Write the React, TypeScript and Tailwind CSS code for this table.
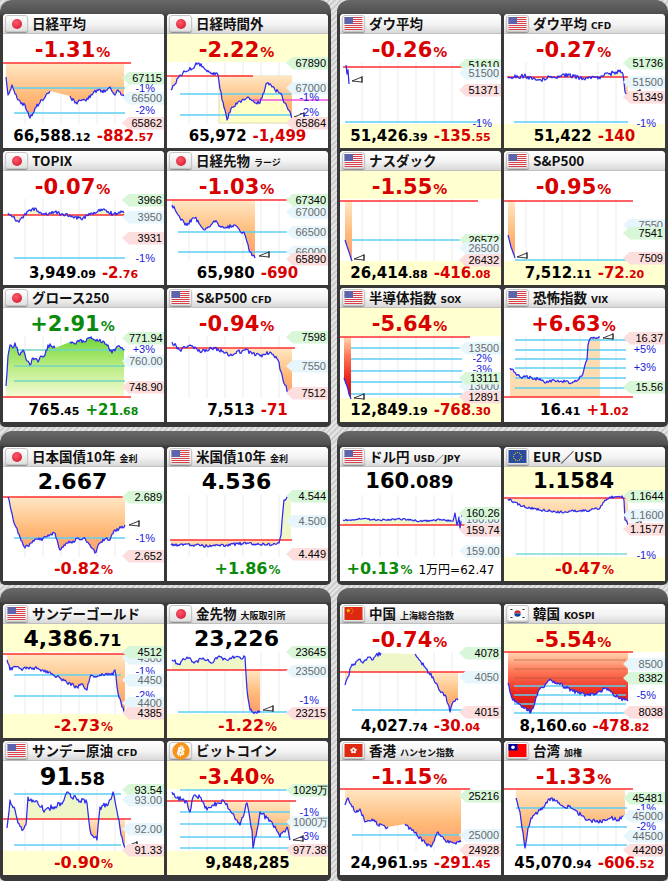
import React from "react";

type Kind = "hi" | "lo" | "mid" | "pct";
type Label = [number, string, Kind];
type Flag = "jp" | "us" | "eu" | "cn" | "kr" | "hk" | "tw" | "btc";

interface Chart {
  ref: number;
  refX?: [number, number];
  keys: number[][];
  amp?: number;
  below?: "orange" | "red" | "none";
  above?: "pale" | "green" | "orange" | "none";
  cyan?: number[];
  cyanX?: [number, number];
  cyanColor?: string;
  dark?: number[];
  magenta?: [number, number, number];
  box?: [number, number, number, number];
  marker?: [number, number];
  labels: Label[];
}

interface TileData {
  flag: Flag;
  title: string;
  sub?: string;
  top: React.ReactNode;
  topYellow?: boolean;
  bottom: React.ReactNode;
  bottomYellow?: boolean;
  chart: Chart;
}

const RED = "text-[#d80000]";
const GRN = "text-[#0a8a0a]";
const NUM = "[font-family:'DejaVu_Sans',sans-serif] font-bold";

const TAG_BASE =
  "absolute right-0 h-[13px] w-[42px] leading-[13px] text-[11px] text-right whitespace-nowrap [font-family:'Liberation_Sans',sans-serif]";
const TAG: Record<Kind, string> = {
  hi: TAG_BASE + " pl-[7px] pr-[2px] text-black bg-[#d8f6d8] [clip-path:polygon(7px_0,100%_0,100%_100%,7px_100%,0_50%)]",
  lo: TAG_BASE + " pl-[7px] pr-[2px] text-black bg-[#fcdede] [clip-path:polygon(7px_0,100%_0,100%_100%,7px_100%,0_50%)]",
  mid: TAG_BASE + " pl-[7px] pr-[2px] text-[#6a6a6a] bg-[#e6f6fc] [clip-path:polygon(7px_0,100%_0,100%_100%,7px_100%,0_50%)]",
  pct: TAG_BASE + " pr-[9px] text-[#1a1ae0]",
};

function PctTop({ v, c }: { v: string; c: string }) {
  return (
    <div className={`h-full flex items-baseline justify-center pr-[22px] pt-[6px] ${NUM} ${c}`}>
      <span className="text-[21px] leading-none">{v}</span>
      <span className="text-[14px] leading-none ml-[1px]">%</span>
    </div>
  );
}

function TopVal({ i, d, bi, sd }: { i: string; d?: string; bi: string; sd?: string }) {
  return (
    <div className={`h-full flex items-baseline justify-center pr-[22px] pt-[4px] text-black ${NUM}`}>
      <span className={`${bi} leading-none`}>{i}</span>
      {d && <span className={`${sd} leading-none`}>{d}</span>}
    </div>
  );
}

function Vals({ a, ad, b, bd, c }: { a: string; ad?: string; b?: string; bd?: string; c?: string }) {
  return (
    <div className={`h-full flex items-baseline justify-center gap-[6px] pt-[5px] ${NUM}`}>
      <span className="text-[15px] leading-none text-black">
        {a}
        {ad && <span className="text-[11px]">{ad}</span>}
      </span>
      {b && (
        <span className={`text-[15px] leading-none ${c}`}>
          {b}
          {bd && <span className="text-[11px]">{bd}</span>}
        </span>
      )}
    </div>
  );
}

function PctBot({ v, c, extra }: { v: string; c: string; extra?: string }) {
  return (
    <div className={`h-full flex items-baseline justify-center pt-[4px] ${NUM}`}>
      <span className={`text-[16px] leading-none ${c}`}>{v}</span>
      <span className={`text-[12px] leading-none ml-[1px] ${c}`}>%</span>
      {extra && (
        <span className="ml-[6px] text-[12px] leading-none font-normal text-black [font-family:'DejaVu_Sans','Noto_Sans_CJK_JP',sans-serif]">
          {extra}
        </span>
      )}
    </div>
  );
}

function star(cx: number, cy: number, r: number) {
  const p: string[] = [];
  for (let i = 0; i < 10; i++) {
    const a = -Math.PI / 2 + (i * Math.PI) / 5;
    const rr = i % 2 === 0 ? r : r * 0.4;
    p.push(`${(cx + rr * Math.cos(a)).toFixed(2)},${(cy + rr * Math.sin(a)).toFixed(2)}`);
  }
  return p.join(" ");
}

function FlagIcon({ f }: { f: Flag }) {
  if (f === "jp")
    return <span className="w-[10px] h-[10px] rounded-full bg-[radial-gradient(circle_at_40%_35%,#ff5a6a,#cc0f2a)]" />;
  if (f === "btc")
    return (
      <svg width="18" height="18" viewBox="0 0 20 20">
        <circle cx="10" cy="10" r="9.6" fill="#f7931a" />
        <g transform="rotate(14 10 10)">
          <line x1="8.6" y1="3.6" x2="8.6" y2="16.4" stroke="#fff" strokeWidth="1" />
          <line x1="10.8" y1="3.6" x2="10.8" y2="16.4" stroke="#fff" strokeWidth="1" />
          <text x="10.3" y="14.4" textAnchor="middle" fontSize="12.5" fontWeight="700" fill="#fff" fontFamily="Liberation Sans, sans-serif">
            B
          </text>
        </g>
      </svg>
    );
  return (
    <svg width="19" height="13" viewBox="0 0 18 13">
      {f === "us" && (
        <>
          <rect width="18" height="13" fill="#f4f4f4" />
          {[0, 2, 4, 6, 8, 10, 12].map((y) => (
            <rect key={y} y={y} width="18" height="1" fill="#d8404a" />
          ))}
          <rect width="8.5" height="7" fill="#5b64ad" />
        </>
      )}
      {f === "eu" && (
        <>
          <rect width="18" height="13" fill="#2a4c9f" />
          {Array.from({ length: 12 }).map((_, i) => (
            <circle key={i} cx={9 + 4 * Math.cos((i * Math.PI) / 6)} cy={6.5 + 4 * Math.sin((i * Math.PI) / 6)} r="0.6" fill="#ffd800" />
          ))}
        </>
      )}
      {f === "cn" && (
        <>
          <rect width="18" height="13" fill="#de2910" />
          <polygon points={star(3.8, 3.6, 2.4)} fill="#ffde00" />
          <polygon points={star(7.2, 1.4, 0.8)} fill="#ffde00" />
          <polygon points={star(8.4, 3, 0.8)} fill="#ffde00" />
          <polygon points={star(8.4, 5, 0.8)} fill="#ffde00" />
          <polygon points={star(7.2, 6.5, 0.8)} fill="#ffde00" />
        </>
      )}
      {f === "kr" && (
        <>
          <rect width="18" height="13" fill="#fafafa" />
          <path d="M5.8 6.5 A3.2 3.2 0 0 1 12.2 6.5 Z" fill="#cd2e3a" />
          <path d="M5.8 6.5 A3.2 3.2 0 0 0 12.2 6.5 Z" fill="#0047a0" />
          <rect x="2" y="2" width="2" height="1" fill="#222" />
          <rect x="14" y="2" width="2" height="1" fill="#222" />
          <rect x="2" y="10" width="2" height="1" fill="#222" />
          <rect x="14" y="10" width="2" height="1" fill="#222" />
        </>
      )}
      {f === "hk" && (
        <>
          <rect width="18" height="13" fill="#de2910" />
          {[0, 1, 2, 3, 4].map((i) => {
            const a = -Math.PI / 2 + (i * 2 * Math.PI) / 5;
            return <ellipse key={i} cx={9 + 2 * Math.cos(a)} cy={6.5 + 2 * Math.sin(a)} rx="1.4" ry="1.1" fill="#fff" />;
          })}
        </>
      )}
      {f === "tw" && (
        <>
          <rect width="18" height="13" fill="#fe0000" />
          <rect width="9" height="6.5" fill="#000095" />
          <circle cx="4.5" cy="3.25" r="1.8" fill="#fff" />
        </>
      )}
    </svg>
  );
}

function build(keys: number[][], amp: number, seed: number) {
  let s = seed * 9301 + 49297;
  const rnd = () => {
    s = (s * 16807) % 2147483647;
    return s / 2147483647;
  };
  const pts: { x: number; y: number; b: boolean }[] = [];
  keys.forEach((k, i) => {
    if (i === 0) {
      pts.push({ x: k[0], y: k[1], b: false });
      return;
    }
    const [x0, y0] = keys[i - 1];
    const [x1, y1] = k;
    if (k[2]) {
      pts.push({ x: x1, y: y1, b: true });
      return;
    }
    const n = Math.max(1, Math.round(x1 - x0));
    for (let j = 1; j <= n; j++) {
      const t = j / n;
      const nz = j < n ? (rnd() - 0.5) * 2 * amp : 0;
      pts.push({ x: x0 + (x1 - x0) * t, y: Math.min(64, Math.max(-1, y0 + (y1 - y0) * t + nz)), b: false });
    }
  });
  return pts;
}

const GRID = [22, 40, 58, 76, 94, 112];

function ChartView({ c, id, seed }: { c: Chart; id: string; seed: number }) {
  const pts = build(c.keys, c.amp ?? 2, seed);
  const first = pts[0];
  const last = pts[pts.length - 1];
  const line = pts.map((p, i) => `${i === 0 || p.b ? "M" : "L"}${p.x.toFixed(1)} ${p.y.toFixed(1)}`).join("");
  const poly = `${first.x},${c.ref} ` + pts.map((p) => `${p.x.toFixed(1)},${p.y.toFixed(1)}`).join(" ") + ` ${last.x},${c.ref}`;
  const [rx1, rx2] = c.refX ?? [0, 128];
  const [cx1, cx2] = c.cyanX ?? [11, 122];
  const below = c.below ?? "orange";
  const above = c.above ?? "pale";
  return (
    <div className="relative z-10 h-[62px]">
      <svg width="161" height="62" className="absolute left-0 top-0 overflow-visible">
        <defs>
          <linearGradient id={`o${id}`} gradientUnits="userSpaceOnUse" x1="0" y1={c.ref} x2="0" y2={Math.max(c.ref + 1, 62)}>
            <stop offset="0" stopColor="#ffe7c4" />
            <stop offset="0.55" stopColor="#ffb977" />
            <stop offset="1" stopColor="#ff9870" />
          </linearGradient>
          <linearGradient id={`r${id}`} gradientUnits="userSpaceOnUse" x1="0" y1={c.ref} x2="0" y2="62">
            <stop offset="0" stopColor="#ffd8b0" />
            <stop offset="0.3" stopColor="#ff7a58" />
            <stop offset="0.65" stopColor="#ec2a20" />
            <stop offset="1" stopColor="#c80e0e" />
          </linearGradient>
          <linearGradient id={`g${id}`} gradientUnits="userSpaceOnUse" x1="0" y1="0" x2="0" y2={Math.max(c.ref, 1)}>
            <stop offset="0" stopColor="#6fd638" />
            <stop offset="0.45" stopColor="#b4ea7a" />
            <stop offset="1" stopColor="#f4fcd6" />
          </linearGradient>
          <clipPath id={`a${id}`}>
            <rect x="0" y="-10" width="161" height={c.ref + 10} />
          </clipPath>
          <clipPath id={`b${id}`}>
            <rect x="0" y={c.ref} width="161" height="100" />
          </clipPath>
        </defs>
        {GRID.map((x) => (
          <line key={x} x1={x} y1="0" x2={x} y2="62" stroke="#ebebeb" strokeWidth="1" />
        ))}
        {c.box && (
          <rect x={c.box[0]} y={c.box[1]} width={c.box[2]} height={c.box[3]} fill="#ffffc6" stroke="#d4d4a8" strokeWidth="0.8" />
        )}
        {above !== "none" && (
          <polygon
            points={poly}
            clipPath={`url(#a${id})`}
            fill={above === "green" ? `url(#g${id})` : above === "orange" ? "#fcdcb0" : "#eff7c8"}
          />
        )}
        {below !== "none" && (
          <polygon points={poly} clipPath={`url(#b${id})`} fill={below === "red" ? `url(#r${id})` : `url(#o${id})`} />
        )}
        {(c.dark ?? []).map((y) => (
          <line key={`d${y}`} x1={cx1} y1={y} x2={cx2} y2={y} stroke="#a0523a" strokeOpacity="0.55" strokeWidth="1" />
        ))}
        {(c.cyan ?? []).map((y) => (
          <line key={`c${y}`} x1={cx1} y1={y} x2={cx2} y2={y} stroke={c.cyanColor ?? "#5ccff2"} strokeWidth="1.3" />
        ))}
        <line x1={rx1} y1={c.ref} x2={rx2} y2={c.ref} stroke="#ff2e2e" strokeWidth="1.3" />
        {c.magenta && (
          <line x1={c.magenta[1]} y1={c.magenta[0]} x2={c.magenta[2]} y2={c.magenta[0]} stroke="#f050e0" strokeWidth="1.3" />
        )}
        <path d={line} fill="none" stroke="#2b2bf2" strokeWidth="1.25" strokeLinejoin="round" />
        {c.marker && (
          <path
            d={`M${c.marker[0]} ${c.marker[1]} l10 -4 l0 5 z M${c.marker[0] + 10} ${c.marker[1] - 5} l0 7`}
            fill="#fff"
            stroke="#222"
            strokeWidth="0.9"
          />
        )}
      </svg>
      {c.labels.map(([y, t, k], i) => (
        <div key={i} className={TAG[k]} style={{ top: y - 6.5 }}>
          {t}
        </div>
      ))}
    </div>
  );
}

function Tile({ d, id, seed }: { d: TileData; id: string; seed: number }) {
  return (
    <div className="w-[161px] h-[134px] bg-white rounded-t-[4px] overflow-hidden flex flex-col">
      <div className="h-[20px] shrink-0 flex items-center gap-[4px] pl-[2px] bg-[linear-gradient(#ffffff,#f3f3f3_55%,#d8d8d8)] border-b border-[#c0c0c0]">
        <div className="w-[23px] h-[17px] shrink-0 flex items-center justify-center rounded-[3px] border border-[#c6c6c6] bg-[linear-gradient(#ffffff,#e0e0e0)] shadow-[0_1px_1px_rgba(0,0,0,0.35)]">
          <FlagIcon f={d.flag} />
        </div>
        <div className="flex items-baseline gap-[4px] whitespace-nowrap">
          <span className="text-[13.5px] leading-none font-bold text-[#111] [font-family:'Noto_Sans_CJK_JP',sans-serif]">
            {d.title}
          </span>
          {d.sub && (
            <span className="text-[9px] leading-none font-bold text-[#111] [font-family:'DejaVu_Sans','Noto_Sans_CJK_JP',sans-serif]">
              {d.sub}
            </span>
          )}
        </div>
      </div>
      <div className={d.topYellow ? "h-[28px] shrink-0 bg-[#ffffd0]" : "h-[28px] shrink-0"}>{d.top}</div>
      <ChartView c={d.chart} id={id} seed={seed} />
      <div className={d.bottomYellow ? "h-[24px] shrink-0 bg-[#ffffd0]" : "h-[24px] shrink-0"}>{d.bottom}</div>
    </div>
  );
}

const nikkei: TileData = {
  flag: "jp",
  title: "日経平均",
  top: <PctTop v="-1.31" c={RED} />,
  bottom: <Vals a="66,588" ad=".12" b="-882" bd=".57" c={RED} />,
  chart: {
    ref: 1,
    keys: [[3, 15], [5, 33], [9, 23], [15, 38], [22, 43], [27, 56], [32, 46], [39, 38], [47, 29], [67, 34, 1], [72, 41], [82, 38], [89, 33], [94, 28], [102, 30], [107, 25], [112, 33], [115, 28], [121, 34]],
    cyan: [26, 51],
    labels: [[16, "67115", "hi"], [26, "-1%", "pct"], [36, "66500", "mid"], [48, "-2%", "pct"], [61, "65862", "lo"]],
  },
};

const nikkeiNight: TileData = {
  flag: "jp",
  title: "日経時間外",
  topYellow: true,
  top: <PctTop v="-2.22" c={RED} />,
  bottom: <Vals a="65,972" b="-1,499" c={RED} />,
  chart: {
    ref: 14,
    refX: [0, 86],
    magenta: [38, 86, 161],
    box: [52, 14, 72, 47],
    above: "none",
    keys: [[4, 28], [13, 13], [22, 8], [31, 1], [37, 6], [43, 10], [51, 13], [55, 38], [60, 58], [65, 45], [70, 42], [75, 38], [81, 35], [87, 40], [93, 41], [100, 21], [105, 25], [108, 28], [113, 31], [118, 41], [125, 56]],
    cyan: [32, 53],
    cyanX: [13, 124],
    marker: [127, 55],
    labels: [[1, "67890", "hi"], [26, "67000", "mid"], [35, "-1%", "pct"], [50, "-2%", "pct"], [61, "65864", "lo"]],
  },
};

const dow: TileData = {
  flag: "us",
  title: "ダウ平均",
  top: <PctTop v="-0.26" c={RED} />,
  bottomYellow: true,
  bottom: <Vals a="51,426" ad=".39" b="-135" bd=".55" c={RED} />,
  chart: {
    ref: 5,
    refX: [3, 158],
    amp: 0,
    keys: [[6, 3], [7, 12], [8, 8], [9, 22]],
    cyan: [60],
    cyanX: [5, 140],
    marker: [12, 19],
    labels: [[3, "51610", "hi"], [11, "51500", "mid"], [28, "51371", "lo"], [61, "-1%", "pct"]],
  },
};

const dowCfd: TileData = {
  flag: "us",
  title: "ダウ平均",
  sub: "CFD",
  top: <PctTop v="-0.27" c={RED} />,
  bottomYellow: true,
  bottom: <Vals a="51,422" b="-140" c={RED} />,
  chart: {
    ref: 15,
    refX: [3, 124],
    amp: 2.2,
    keys: [[4, 16], [20, 14], [35, 18], [50, 15], [65, 13], [80, 17], [95, 15], [105, 12], [112, 10], [116, 8], [119, 12], [121, 30], [124, 33]],
    cyan: [60],
    cyanX: [10, 124],
    marker: [126, 32],
    labels: [[1, "51736", "hi"], [20, "51500", "mid"], [35, "51349", "lo"], [61, "-1%", "pct"]],
  },
};

const topix: TileData = {
  flag: "jp",
  title: "TOPIX",
  top: <PctTop v="-0.07" c={RED} />,
  bottom: <Vals a="3,949" ad=".09" b="-2" bd=".76" c={RED} />,
  chart: {
    ref: 16,
    keys: [[5, 14], [10, 18], [15, 22], [20, 19], [25, 12], [30, 9], [38, 14], [45, 16], [52, 13], [60, 15], [70, 18], [80, 19], [88, 14], [95, 12], [102, 11], [110, 15], [116, 13], [121, 14]],
    cyan: [59],
    labels: [[1, "3966", "hi"], [18, "3950", "mid"], [39, "3931", "lo"], [59, "-1%", "pct"]],
  },
};

const nikkeiFut: TileData = {
  flag: "jp",
  title: "日経先物",
  sub: "ラージ",
  top: <PctTop v="-1.03" c={RED} />,
  bottom: <Vals a="65,980" b="-690" c={RED} />,
  chart: {
    ref: 1,
    keys: [[5, 6], [11, 16], [18, 26], [28, 19], [38, 31], [48, 23], [58, 29], [68, 26], [78, 36], [83, 53], [88, 59]],
    cyan: [33, 53],
    marker: [92, 57],
    labels: [[1, "67340", "hi"], [13, "67000", "mid"], [33, "66500", "mid"], [53, "66000", "mid"], [60, "65890", "lo"]],
  },
};

const nasdaq: TileData = {
  flag: "us",
  title: "ナスダック",
  topYellow: true,
  top: <PctTop v="-1.55" c={RED} />,
  bottomYellow: true,
  bottom: <Vals a="26,414" ad=".88" b="-416" bd=".08" c={RED} />,
  chart: {
    ref: 2,
    refX: [0, 138],
    amp: 0.5,
    keys: [[5, 41], [8, 50], [12, 62]],
    cyan: [41],
    cyanX: [12, 123],
    marker: [14, 60],
    labels: [[41, "26572", "hi"], [49, "26500", "mid"], [61, "26432", "lo"]],
  },
};

const sp500: TileData = {
  flag: "us",
  title: "S&P500",
  top: <PctTop v="-0.95" c={RED} />,
  bottomYellow: true,
  bottom: <Vals a="7,512" ad=".11" b="-72" bd=".20" c={RED} />,
  chart: {
    ref: 2,
    refX: [0, 129],
    amp: 0.5,
    keys: [[4, 36], [7, 48], [11, 59]],
    cyan: [61],
    cyanX: [11, 126],
    marker: [13, 58],
    labels: [[26, "7550", "mid"], [34, "7541", "hi"], [59, "7509", "lo"]],
  },
};

const growth: TileData = {
  flag: "jp",
  title: "グロース250",
  top: <PctTop v="+2.91" c={GRN} />,
  bottom: <Vals a="765" ad=".45" b="+21" bd=".68" c={GRN} />,
  chart: {
    ref: 61,
    above: "green",
    below: "none",
    keys: [[3, 50], [5, 20], [7, 9], [10, 12], [12, 7], [15, 16], [17, 19], [20, 14], [24, 25], [27, 29], [30, 22], [35, 26], [38, 20], [42, 19], [45, 9], [52, 12], [67, 6, 1], [72, 8], [77, 4], [82, 6], [87, 2], [93, 5], [100, 5], [105, 9], [109, 17], [113, 12], [115, 10], [118, 12], [121, 14]],
    cyan: [14, 30, 45],
    cyanColor: "#72d6c4",
    labels: [[2, "771.94", "hi"], [13, "+3%", "pct"], [25, "760.00", "mid"], [51, "748.90", "lo"]],
  },
};

const spCfd: TileData = {
  flag: "us",
  title: "S&P500",
  sub: "CFD",
  top: <PctTop v="-0.94" c={RED} />,
  bottom: <Vals a="7,513" b="-71" c={RED} />,
  chart: {
    ref: 12,
    keys: [[5, 6], [13, 14], [23, 9], [33, 16], [48, 12], [63, 19], [78, 14], [93, 20], [103, 16], [111, 24], [116, 44], [121, 56], [125, 55]],
    marker: [127, 56],
    labels: [[1, "7598", "hi"], [30, "7550", "mid"], [57, "7512", "lo"]],
  },
};

const sox: TileData = {
  flag: "us",
  title: "半導体指数",
  sub: "SOX",
  topYellow: true,
  top: <PctTop v="-5.64" c={RED} />,
  bottomYellow: true,
  bottom: <Vals a="12,849" ad=".19" b="-768" bd=".30" c={RED} />,
  chart: {
    ref: 1,
    refX: [0, 130],
    below: "red",
    amp: 0.8,
    keys: [[4, 42], [7, 50], [9, 58], [11, 63]],
    cyan: [12, 23, 35, 46, 58],
    marker: [14, 62],
    labels: [[12, "13500", "mid"], [22, "-2%", "pct"], [33, "-3%", "pct"], [50, "13000", "mid"], [42, "13111", "hi"], [61, "12891", "lo"]],
  },
};

const vix: TileData = {
  flag: "us",
  title: "恐怖指数",
  sub: "VIX",
  top: <PctTop v="+6.63" c={RED} />,
  bottom: <Vals a="16" ad=".41" b="+1" bd=".02" c={RED} />,
  chart: {
    ref: 61,
    refX: [0, 129],
    above: "orange",
    below: "none",
    amp: 1.6,
    keys: [[6, 32], [10, 36], [16, 41], [22, 40], [28, 42], [34, 43], [41, 47], [48, 44], [55, 46], [62, 45], [68, 47], [74, 44], [78, 40], [81, 29], [83, 24], [84, 9], [86, 3], [91, 2], [96, 1]],
    cyan: [4, 14, 23, 32, 42, 52],
    marker: [99, 2],
    labels: [[2, "16.37", "lo"], [13, "+5%", "pct"], [31, "+3%", "pct"], [51, "15.56", "hi"]],
  },
};

const jgb: TileData = {
  flag: "jp",
  title: "日本国債10年",
  sub: "金利",
  top: <TopVal i="2.667" bi="text-[22px]" />,
  bottom: <PctBot v="-0.82" c={RED} />,
  chart: {
    ref: 2,
    amp: 1.8,
    keys: [[5, 2], [8, 15], [12, 30], [17, 42], [22, 53], [28, 48], [33, 44], [37, 45], [45, 40], [52, 38], [57, 55], [63, 48], [70, 46], [76, 44], [82, 43], [87, 50], [92, 58], [97, 48], [102, 44], [107, 45], [112, 35], [118, 33], [122, 30]],
    cyan: [43],
    marker: [126, 30],
    labels: [[2, "2.689", "hi"], [43, "-1%", "pct"], [61, "2.652", "lo"]],
  },
};

const ust: TileData = {
  flag: "us",
  title: "米国債10年",
  sub: "金利",
  top: <TopVal i="4.536" bi="text-[22px]" />,
  bottom: <PctBot v="+1.86" c={GRN} />,
  chart: {
    ref: 45,
    refX: [3, 125],
    amp: 1.5,
    keys: [[4, 50], [20, 49], [40, 51], [60, 50], [80, 48], [100, 50], [112, 48], [114, 40], [116, 15], [117, 5], [120, 2], [124, 0]],
    labels: [[1, "4.544", "hi"], [26, "4.500", "mid"], [59, "4.449", "lo"]],
  },
};

const usdjpy: TileData = {
  flag: "us",
  title: "ドル円",
  sub: "USD／JPY",
  top: <TopVal i="160" d=".089" bi="text-[21px]" sd="text-[18px]" />,
  bottom: <PctBot v="+0.13" c={GRN} extra="1万円=62.47" />,
  chart: {
    ref: 30,
    refX: [0, 127],
    amp: 0.9,
    keys: [[3, 25], [20, 24], [40, 25], [60, 24], [80, 26], [100, 25], [113, 26], [115, 18], [117, 30], [119, 22], [120, 33], [122, 20], [124, 24]],
    marker: [126, 24],
    labels: [[24, "160.00", "mid"], [18, "160.26", "hi"], [35, "159.74", "lo"], [56, "159.00", "mid"]],
  },
};

const eurusd: TileData = {
  flag: "eu",
  title: "EUR／USD",
  topYellow: true,
  top: <TopVal i="1.1584" bi="text-[21px]" />,
  bottomYellow: true,
  bottom: <PctBot v="-0.47" c={RED} />,
  chart: {
    ref: 3,
    refX: [0, 127],
    amp: 1.2,
    keys: [[4, 4], [10, 7], [16, 10], [26, 13], [36, 15], [46, 16], [56, 17], [66, 16], [76, 16], [86, 15], [96, 13], [101, 5], [106, 2], [111, 2], [116, 2], [118, 1], [120, 5], [121, 25], [123, 27], [124, 30]],
    cyan: [59],
    cyanX: [12, 123],
    cyanColor: "#74ddd2",
    marker: [127, 30],
    labels: [[1, "1.1644", "hi"], [20, "1.1600", "mid"], [34, "1.1577", "lo"], [60, "-1%", "pct"]],
  },
};

const gold: TileData = {
  flag: "us",
  title: "サンデーゴールド",
  topYellow: true,
  top: <TopVal i="4,386" d=".71" bi="text-[22px]" sd="text-[16px]" />,
  bottomYellow: true,
  bottom: <PctBot v="-2.73" c={RED} />,
  chart: {
    ref: 2,
    keys: [[4, 8], [7, 18], [10, 15], [20, 17], [30, 16], [40, 18], [47, 20], [57, 26], [64, 31], [74, 35], [80, 33], [84, 38], [87, 25], [97, 23], [110, 23], [112, 18], [115, 41], [119, 55], [122, 61]],
    cyan: [23, 44],
    cyanX: [11, 118],
    marker: [124, 60],
    labels: [[6, "4500", "mid"], [0, "4512", "hi"], [19, "-1%", "pct"], [28, "4450", "mid"], [43, "-2%", "pct"], [51, "4400", "mid"], [61, "4385", "lo"]],
  },
};

const goldFut: TileData = {
  flag: "jp",
  title: "金先物",
  sub: "大阪取引所",
  top: <TopVal i="23,226" bi="text-[22px]" />,
  bottomYellow: true,
  bottom: <PctBot v="-1.22" c={RED} />,
  chart: {
    ref: 18,
    refX: [0, 123],
    keys: [[5, 8], [12, 12], [20, 5], [28, 10], [36, 6], [44, 11], [52, 4], [60, 8], [68, 5], [75, 7], [78, 5], [80, 38], [83, 58], [88, 60], [93, 59]],
    cyan: [60],
    cyanX: [11, 120],
    marker: [96, 58],
    labels: [[0, "23645", "hi"], [19, "23500", "mid"], [48, "-1%", "pct"], [61, "23215", "lo"]],
  },
};

const china: TileData = {
  flag: "cn",
  title: "中国",
  sub: "上海総合指数",
  top: <PctTop v="-0.74" c={RED} />,
  bottom: <Vals a="4,027" ad=".74" b="-30" bd=".04" c={RED} />,
  chart: {
    ref: 20,
    keys: [[5, 33], [8, 25], [11, 15], [14, 12], [18, 8], [22, 10], [28, 5], [32, 8], [36, 3], [41, 1], [75, 2, 1], [78, 6], [81, 10], [85, 15], [88, 21], [93, 25], [98, 35], [102, 40], [105, 43], [108, 52], [110, 60], [113, 50], [118, 48]],
    cyan: [58],
    cyanX: [12, 122],
    labels: [[1, "4078", "hi"], [25, "4050", "mid"], [60, "4015", "lo"]],
  },
};

const korea: TileData = {
  flag: "kr",
  title: "韓国",
  sub: "KOSPI",
  topYellow: true,
  top: <PctTop v="-5.54" c={RED} />,
  bottom: <Vals a="8,160" ad=".60" b="-478" bd=".82" c={RED} />,
  chart: {
    ref: 0,
    refX: [0, 129],
    below: "red",
    keys: [[4, 31], [7, 43], [11, 50], [16, 52], [21, 56], [27, 60], [31, 50], [34, 40], [41, 33], [47, 28], [54, 31], [61, 35], [68, 38], [74, 41], [84, 43], [94, 40], [102, 36], [107, 40], [114, 45], [121, 48], [124, 49]],
    dark: [8, 17, 26],
    cyan: [34, 43, 52, 61],
    cyanX: [10, 122],
    labels: [[12, "8500", "mid"], [26, "8382", "hi"], [43, "-5%", "pct"], [60, "8038", "lo"]],
  },
};

const oil: TileData = {
  flag: "us",
  title: "サンデー原油",
  sub: "CFD",
  top: <TopVal i="91" d=".58" bi="text-[24px]" sd="text-[18px]" />,
  bottomYellow: true,
  bottom: <PctBot v="-0.90" c={RED} />,
  chart: {
    ref: 30,
    amp: 3,
    keys: [[4, 39], [7, 11], [11, 18], [15, 34], [20, 41], [23, 36], [25, 8], [30, 11], [37, 18], [42, 21], [50, 18], [60, 13], [65, 3], [74, 11], [84, 14], [87, 41], [94, 51], [97, 18], [105, 16], [110, 3], [115, 28], [119, 48], [122, 59]],
    cyan: [5, 56],
    cyanX: [11, 118],
    marker: [124, 57],
    labels: [[1, "93.54", "hi"], [11, "93.00", "mid"], [40, "92.00", "mid"], [61, "91.33", "lo"]],
  },
};

const btc: TileData = {
  flag: "btc",
  title: "ビットコイン",
  topYellow: true,
  top: <PctTop v="-3.40" c={RED} />,
  bottomYellow: true,
  bottom: <Vals a="9,848,285" />,
  chart: {
    ref: 12,
    refX: [0, 129],
    amp: 2.5,
    keys: [[5, 3], [10, 9], [20, 13], [23, 23], [26, 8], [33, 8], [40, 21], [50, 14], [56, 11], [63, 21], [70, 31], [73, 36], [80, 14], [85, 41], [86, 59], [90, 41], [93, 23], [100, 29], [106, 36], [113, 48], [120, 38], [123, 51]],
    cyan: [1, 23, 35, 48, 59],
    cyanX: [13, 123],
    marker: [126, 51],
    labels: [[1, "1029万", "hi"], [23, "-1%", "pct"], [33, "1000万", "mid"], [47, "-3%", "pct"], [61, "977.387", "lo"]],
  },
};

const hk: TileData = {
  flag: "hk",
  title: "香港",
  sub: "ハンセン指数",
  top: <PctTop v="-1.15" c={RED} />,
  bottom: <Vals a="24,961" ad=".95" b="-291" bd=".45" c={RED} />,
  chart: {
    ref: 0,
    refX: [0, 130],
    keys: [[5, 16], [8, 9], [15, 23], [20, 20], [25, 33], [32, 30], [38, 36], [48, 38], [65, 35, 1], [75, 44], [85, 54], [91, 58], [98, 43], [105, 51], [111, 53], [121, 53]],
    cyan: [46],
    cyanX: [12, 122],
    labels: [[7, "25216", "hi"], [46, "25000", "mid"], [61, "24928", "lo"]],
  },
};

const taiwan: TileData = {
  flag: "tw",
  title: "台湾",
  sub: "加権",
  top: <PctTop v="-1.33" c={RED} />,
  bottom: <Vals a="45,070" ad=".94" b="-606" bd=".52" c={RED} />,
  chart: {
    ref: 0,
    refX: [0, 129],
    keys: [[12, 9], [16, 23], [21, 59], [24, 39], [27, 29], [34, 23], [41, 16], [47, 9], [54, 14], [67, 19], [77, 26], [84, 31], [97, 33], [107, 29], [114, 31], [121, 26]],
    cyan: [19, 38, 56],
    cyanX: [12, 123],
    labels: [[9, "45481", "hi"], [19, "-1%", "pct"], [27, "45000", "mid"], [37, "-2%", "pct"], [47, "44500", "mid"], [61, "44209", "lo"]],
  },
};

function Panel({ tiles, base, pad }: { tiles: TileData[]; base: number; pad: string }) {
  return (
    <div className={`w-[331px] px-[3px] rounded-t-[12px] rounded-b-[5px] bg-[linear-gradient(#686868,#515151_13px,#3a3a3a_16px,#383838)] ${pad}`}>
      <div className="grid grid-cols-[161px_161px] gap-[3px]">
        {tiles.map((t, i) => (
          <Tile key={i} d={t} id={`t${base + i}`} seed={base + i + 3} />
        ))}
      </div>
    </div>
  );
}

export default function App() {
  return (
    <div className="w-[668px] h-[881px] overflow-hidden flex flex-col bg-[repeating-linear-gradient(135deg,#cdcdcd_0px,#cdcdcd_2px,#e4e4e4_2px,#e4e4e4_4px)]">
      <div className="flex gap-[6px]">
        <Panel tiles={[nikkei, nikkeiNight, topix, nikkeiFut, growth, spCfd]} base={0} pad="pt-[14px] pb-[5px]" />
        <Panel tiles={[dow, dowCfd, nasdaq, sp500, sox, vix]} base={10} pad="pt-[14px] pb-[5px]" />
      </div>
      <div className="flex gap-[6px] mt-[4px]">
        <Panel tiles={[jgb, ust]} base={20} pad="pt-[16px] pb-[4px]" />
        <Panel tiles={[usdjpy, eurusd]} base={30} pad="pt-[16px] pb-[4px]" />
      </div>
      <div className="flex gap-[6px] mt-[3px]">
        <Panel tiles={[gold, goldFut, oil, btc]} base={40} pad="pt-[16px] pb-[6px]" />
        <Panel tiles={[china, korea, hk, taiwan]} base={50} pad="pt-[16px] pb-[6px]" />
      </div>
    </div>
  );
}
